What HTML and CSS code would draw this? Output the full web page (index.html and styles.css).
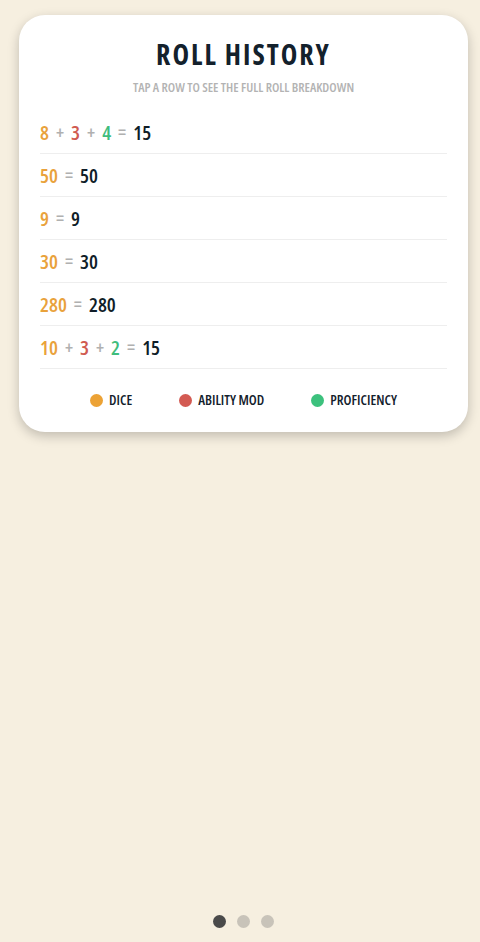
FILE: index.html
```html
<!DOCTYPE html>
<html lang="en">
<head>
  <meta charset="UTF-8">
  <meta name="viewport" content="width=device-width, initial-scale=1.0">
  <title>Roll History</title>
  <link rel="stylesheet" href="styles.css">
</head>

<body>
  <div class="screen">
    <div class="card">
      <h1 class="title">Roll History</h1>
      <p class="hint">Tap a row to see the full roll breakdown</p>

      <ul class="rolls">
        <li class="roll">
          <span class="dice">8</span><span class="op">+</span><span class="mod">3</span><span class="op">+</span><span class="prof">4</span><span class="op">=</span><span class="total">15</span>
        </li>
        <li class="roll">
          <span class="dice">50</span><span class="op">=</span><span class="total">50</span>
        </li>
        <li class="roll">
          <span class="dice">9</span><span class="op">=</span><span class="total">9</span>
        </li>
        <li class="roll">
          <span class="dice">30</span><span class="op">=</span><span class="total">30</span>
        </li>
        <li class="roll">
          <span class="dice">280</span><span class="op">=</span><span class="total">280</span>
        </li>
        <li class="roll">
          <span class="dice">10</span><span class="op">+</span><span class="mod">3</span><span class="op">+</span><span class="prof">2</span><span class="op">=</span><span class="total">15</span>
        </li>
      </ul>

      <div class="legend">
        <div class="key"><span class="swatch swatch-dice"></span>Dice</div>
        <div class="key"><span class="swatch swatch-mod"></span>Ability Mod</div>
        <div class="key"><span class="swatch swatch-prof"></span>Proficiency</div>
      </div>
    </div>

    <div class="pager">
      <span class="page active"></span>
      <span class="page"></span>
      <span class="page"></span>
    </div>
  </div>
</body>

</html>
```

FILE: styles.css
```css
body {
  margin: 0;
  background-color: #f6efe0;
  font-family: "Open Sans", "DejaVu Sans Condensed", sans-serif;
  font-stretch: 75%;
  font-weight: 600;
  text-transform: uppercase;
}

.screen {
  display: flex;
  flex-direction: column;
  height: 942px;
  padding: 0 12px 0 19px;
  box-sizing: border-box;
}

.card {
  margin-top: 15px;
  padding: 22px 21px;
  background-color: #fff;
  border-radius: 26px;
  box-shadow: 0 4px 12px rgba(0, 0, 0, 0.22);
}

.title {
  margin: 0;
  text-align: center;
  font-size: 28px;
  font-weight: 700;
  line-height: 34px;
  letter-spacing: 2px;
  color: #13212c;
}

.hint {
  margin: 8px 0 0;
  text-align: center;
  font-size: 13px;
  line-height: 16px;
  color: #b3b3b3;
}

.rolls {
  list-style: none;
  margin: 16px 0 0;
  padding: 0;
}

.roll {
  display: flex;
  align-items: center;
  height: 42px;
  border-bottom: 1px solid #eeeeee;
  font-size: 20px;
  color: #0f1d28;
}

.roll .op {
  margin: 0 7px;
  color: #b0b0b0;
  font-size: 18px;
}

.dice { color: #e9a23b; }
.mod { color: #d05b50; }
.prof { color: #3fbd7d; }
.total { color: #0f1d28; }

.legend {
  display: flex;
  justify-content: center;
  gap: 47px;
  margin-top: 21px;
  font-size: 14px;
  line-height: 20px;
  color: #13212c;
}

.key {
  display: flex;
  align-items: center;
  gap: 6px;
}

.swatch {
  width: 13px;
  height: 13px;
  border-radius: 50%;
}

.swatch-dice { background-color: #eca235; }
.swatch-mod { background-color: #d35a52; }
.swatch-prof { background-color: #3cc17d; }

.pager {
  margin-top: auto;
  margin-bottom: 14px;
  display: flex;
  justify-content: center;
  gap: 11px;
}

.page {
  width: 13px;
  height: 13px;
  border-radius: 50%;
  background-color: #c8c3b9;
}

.page.active {
  background-color: #4a4a4a;
}
```
